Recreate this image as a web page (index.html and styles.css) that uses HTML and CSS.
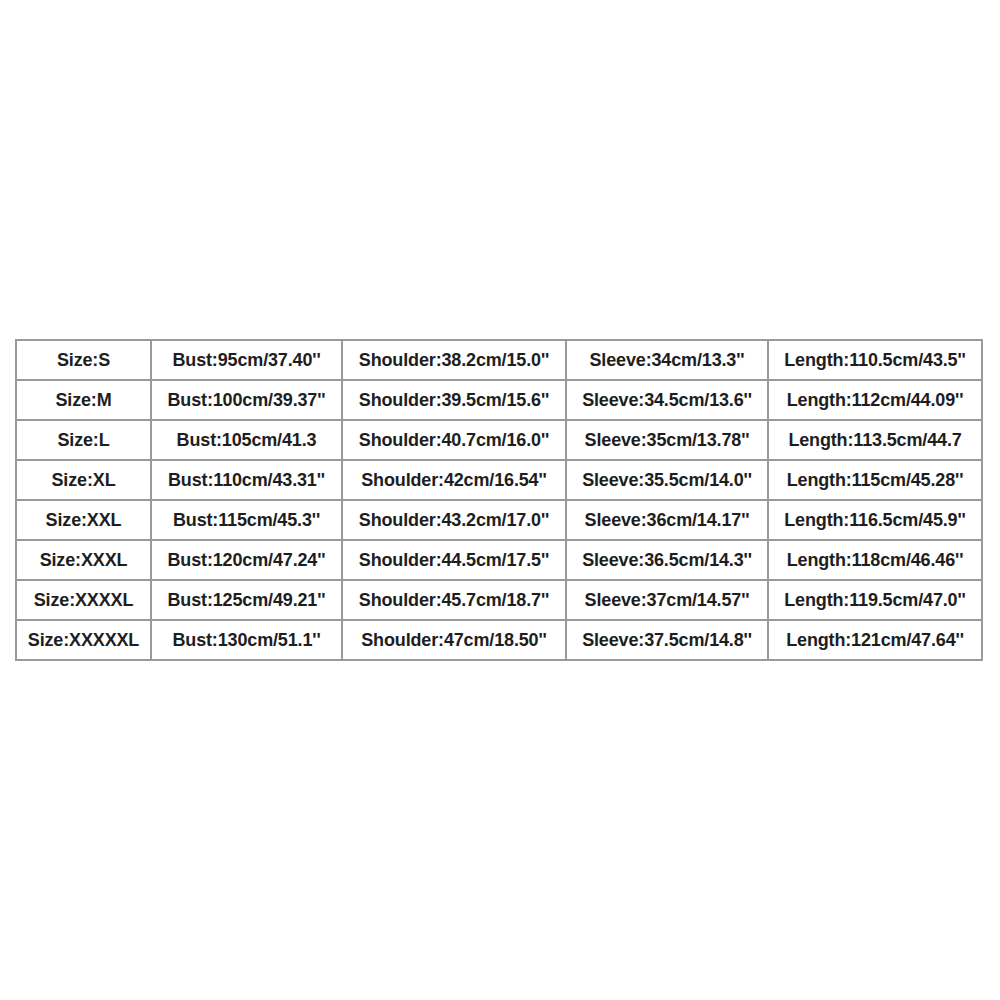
FILE: index.html
```html
<!DOCTYPE html>
<html>
<head>
<meta charset="utf-8">
<link rel="stylesheet" href="styles.css">
</head>
<body>
<div class="page">
<table class="sizes">
<colgroup>
<col class="c1"><col class="c2"><col class="c3"><col class="c4"><col class="c5">
</colgroup>
<tbody>
<tr><td>Size:S</td><td>Bust:95cm/37.40''</td><td>Shoulder:38.2cm/15.0''</td><td>Sleeve:34cm/13.3''</td><td>Length:110.5cm/43.5''</td></tr>
<tr><td>Size:M</td><td>Bust:100cm/39.37''</td><td>Shoulder:39.5cm/15.6''</td><td>Sleeve:34.5cm/13.6''</td><td>Length:112cm/44.09''</td></tr>
<tr><td>Size:L</td><td>Bust:105cm/41.3</td><td>Shoulder:40.7cm/16.0''</td><td>Sleeve:35cm/13.78''</td><td>Length:113.5cm/44.7</td></tr>
<tr><td>Size:XL</td><td>Bust:110cm/43.31''</td><td>Shoulder:42cm/16.54''</td><td>Sleeve:35.5cm/14.0''</td><td>Length:115cm/45.28''</td></tr>
<tr><td>Size:XXL</td><td>Bust:115cm/45.3''</td><td>Shoulder:43.2cm/17.0''</td><td>Sleeve:36cm/14.17''</td><td>Length:116.5cm/45.9''</td></tr>
<tr><td>Size:XXXL</td><td>Bust:120cm/47.24''</td><td>Shoulder:44.5cm/17.5''</td><td>Sleeve:36.5cm/14.3''</td><td>Length:118cm/46.46''</td></tr>
<tr><td>Size:XXXXL</td><td>Bust:125cm/49.21''</td><td>Shoulder:45.7cm/18.7''</td><td>Sleeve:37cm/14.57''</td><td>Length:119.5cm/47.0''</td></tr>
<tr><td>Size:XXXXXL</td><td>Bust:130cm/51.1''</td><td>Shoulder:47cm/18.50''</td><td>Sleeve:37.5cm/14.8''</td><td>Length:121cm/47.64''</td></tr>
</tbody>
</table>
</div>
</body>
</html>
```
FILE: styles.css
```css
html, body {
  margin: 0;
  padding: 0;
  background: #ffffff;
}
.page {
  padding: 339px 0 0 15px;
}
.sizes {
  border-collapse: collapse;
  table-layout: fixed;
  width: 966px;
  font-family: "Liberation Sans", Arial, sans-serif;
  font-weight: bold;
  font-size: 18px;
  color: #1e1e1e;
}
.c1 { width: 135px; }
.c2 { width: 191px; }
.c3 { width: 224px; }
.c4 { width: 202px; }
.c5 { width: 214px; }
.sizes td {
  border: 2px solid #9a9a9a;
  height: 38px;
  padding: 0;
  text-align: center;
  vertical-align: middle;
  white-space: nowrap;
  letter-spacing: -0.15px;
}
```
